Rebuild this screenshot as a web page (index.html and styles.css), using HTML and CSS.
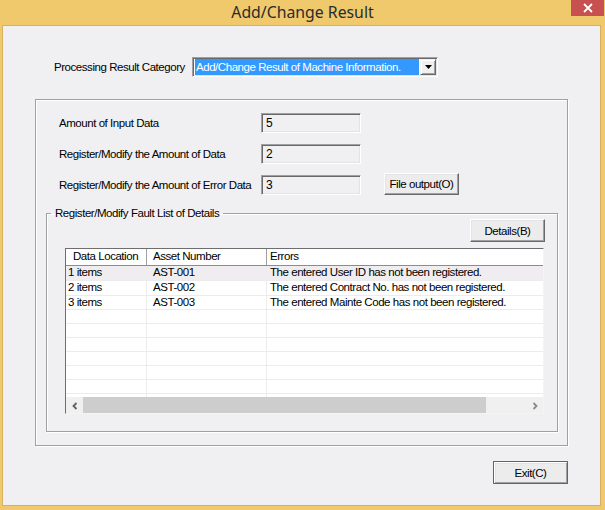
FILE: index.html
```html
<!DOCTYPE html>
<html>
<head>
<meta charset="utf-8">
<title>Add/Change Result</title>
<link rel="stylesheet" href="styles.css">
</head>
<body>
<div class="window">
  <div class="titlebar">
    <span class="title-spacer"></span>
    <span class="title">Add/Change Result</span>
    <div class="close-btn">
      <svg width="10" height="10" viewBox="0 0 10 10"><path d="M1 1 L9 9 M9 1 L1 9" stroke="#fff" stroke-width="1.8" fill="none"/></svg>
    </div>
  </div>
  <div class="client">
    <div class="category-row">
      <span class="cat-label">Processing Result Category</span>
      <div class="combo">
        <span class="combo-value">Add/Change Result of Machine Information.</span>
        <span class="combo-btn"><svg width="7" height="4" viewBox="0 0 7 4"><path d="M0 0 H7 L3.5 4 Z" fill="#000"/></svg></span>
      </div>
    </div>

    <div class="outer-box">
      <div class="field-row">
        <span class="field-label">Amount of Input Data</span>
        <div class="textbox">5</div>
      </div>
      <div class="field-row">
        <span class="field-label">Register/Modify the Amount of Data</span>
        <div class="textbox">2</div>
      </div>
      <div class="field-row">
        <span class="field-label">Register/Modify the Amount of Error Data</span>
        <div class="textbox">3</div>
        <button class="btn file-btn">File output(O)</button>
      </div>

      <fieldset class="group">
        <legend>Register/Modify Fault List of Details</legend>
        <div class="group-toolbar">
          <button class="btn details-btn">Details(B)</button>
        </div>
        <div class="listview">
          <div class="lv-header">
            <div class="hcell c1">Data Location</div>
            <div class="hcell c2">Asset Number</div>
            <div class="hcell c3">Errors</div>
          </div>
          <div class="lv-body">
            <div class="lv-row sel"><div class="cell c1">1 items</div><div class="cell c2">AST-001</div><div class="cell c3">The entered User ID has not been registered.</div></div>
            <div class="lv-row"><div class="cell c1">2 items</div><div class="cell c2">AST-002</div><div class="cell c3">The entered Contract No. has not been registered.</div></div>
            <div class="lv-row"><div class="cell c1">3 items</div><div class="cell c2">AST-003</div><div class="cell c3">The entered Mainte Code has not been registered.</div></div>
            <div class="lv-row"><div class="cell c1"></div><div class="cell c2"></div><div class="cell c3"></div></div>
            <div class="lv-row"><div class="cell c1"></div><div class="cell c2"></div><div class="cell c3"></div></div>
            <div class="lv-row"><div class="cell c1"></div><div class="cell c2"></div><div class="cell c3"></div></div>
            <div class="lv-row"><div class="cell c1"></div><div class="cell c2"></div><div class="cell c3"></div></div>
            <div class="lv-row"><div class="cell c1"></div><div class="cell c2"></div><div class="cell c3"></div></div>
            <div class="lv-row"><div class="cell c1"></div><div class="cell c2"></div><div class="cell c3"></div></div>
            <div class="lv-row"><div class="cell c1"></div><div class="cell c2"></div><div class="cell c3"></div></div>
          </div>
          <div class="hscroll">
            <span class="sb-arrow left"><svg width="8" height="8" viewBox="0 0 8 8"><path d="M5.5 1 L2.5 4 L5.5 7" stroke="#606060" stroke-width="1.8" fill="none"/></svg></span>
            <span class="sb-thumb"></span>
            <span class="sb-track"></span>
            <span class="sb-arrow right"><svg width="8" height="8" viewBox="0 0 8 8"><path d="M2.5 1 L5.5 4 L2.5 7" stroke="#8a8a8a" stroke-width="1.8" fill="none"/></svg></span>
          </div>
        </div>
      </fieldset>
    </div>

    <div class="footer">
      <button class="btn exit-btn">Exit(C)</button>
    </div>
  </div>
</div>
</body>
</html>
```

FILE: styles.css
```css
* { box-sizing: border-box; }

html, body {
  margin: 0;
  padding: 0;
}

body {
  width: 605px;
  height: 510px;
  overflow: hidden;
  font-family: "Liberation Sans", Arial, sans-serif;
  font-size: 11.5px;
  letter-spacing: -0.45px;
  color: #000;
}

.window {
  width: 605px;
  height: 510px;
  background: #f0c96d;
  display: flex;
  flex-direction: column;
}

.titlebar {
  height: 25px;
  flex: none;
  display: grid;
  grid-template-columns: 1fr auto 1fr;
}

.title {
  font-family: "Noto Sans", "Open Sans", sans-serif;
  font-size: 15.8px;
  letter-spacing: 0;
  color: #2b2b2b;
  line-height: 24px;
  padding-left: 0;
}

.close-btn {
  justify-self: end;
  align-self: start;
  width: 33px;
  height: 16px;
  margin-right: 1px;
  background: #c75050;
  display: flex;
  align-items: center;
  justify-content: center;
}

.client {
  flex: 1;
  margin: 0 4px 4px 2px;
  border: 1px solid #d6b163;
  background: #f0eff1;
  display: flex;
  flex-direction: column;
}

/* category row */
.category-row {
  display: flex;
  align-items: center;
  padding: 31px 0 0 51px;
}

.cat-label {
  width: 138px;
  flex: none;
}

.combo {
  width: 246px;
  height: 20px;
  display: flex;
  background: #fff;
  border-style: solid;
  border-width: 1px;
  border-color: #a0a0a0 #fff #fff #a0a0a0;
  box-shadow: inset 1px 1px 0 #696969, inset -1px -1px 0 #e3e3e3;
  padding: 1px 1px 1px 2px;
}

.combo-value {
  flex: 1;
  background: #3399ff;
  color: #fff;
  padding-left: 1px;
  line-height: 16px;
  white-space: nowrap;
  overflow: hidden;
  margin-right: 1px;
}

.combo-btn {
  width: 16px;
  flex: none;
  background: #f0f0f0;
  border-style: solid;
  border-width: 1px;
  border-color: #f0f0f0 #696969 #696969 #f0f0f0;
  box-shadow: inset 1px 1px 0 #fff, inset -1px -1px 0 #a0a0a0;
  display: flex;
  align-items: center;
  justify-content: center;
}

/* outer etched box */
.outer-box {
  margin: 22px 0 0 32px;
  width: 533px;
  height: 347px;
  border: 1px solid #a0a0a0;
  box-shadow: inset 1px 1px 0 #fff, 1px 1px 0 #fff;
  padding: 13px 0 0 10px;
  display: flex;
  flex-direction: column;
}

.field-row {
  display: flex;
  align-items: center;
  height: 20px;
  margin-bottom: 11px;
  padding-left: 13px;
}

.field-label {
  width: 202px;
  flex: none;
}

.textbox {
  width: 100px;
  height: 20px;
  border-style: solid;
  border-width: 1px;
  border-color: #a0a0a0 #fff #fff #a0a0a0;
  box-shadow: inset 1px 1px 0 #696969, inset -1px -1px 0 #e3e3e3;
  padding: 1px 0 0 4px;
  line-height: 16px;
  font-size: 12px;
  letter-spacing: 0;
}

.btn {
  font-family: "Liberation Sans", Arial, sans-serif;
  font-size: 11.5px;
  letter-spacing: -0.45px;
  color: #000;
  background: #ececec;
  border-style: solid;
  border-width: 1px;
  border-color: #fff #696969 #696969 #fff;
  box-shadow: inset -1px -1px 0 #a0a0a0, inset 1px 1px 0 #e3e3e3;
  padding: 0;
  margin: 0;
}

.file-btn {
  width: 75px;
  height: 22px;
  margin-left: 23px;
  margin-top: -3px;
}

/* group box */
.group {
  margin: 1px 0 0 0;
  width: 512px;
  min-width: 0;
  border: 1px solid #a0a0a0;
  box-shadow: inset 1px 1px 0 #fff, 1px 1px 0 #fff;
  padding: 0 0 17px 0;
}

.group legend {
  margin-left: 4px;
  padding: 0 4px;
  line-height: 12px;
}

.group-toolbar {
  display: flex;
  justify-content: flex-end;
  padding-right: 12px;
}

.details-btn {
  width: 75px;
  height: 23px;
}

.listview {
  margin: 6px 0 0 18px;
  width: 479px;
  height: 166px;
  background: #fff;
  border-style: solid;
  border-width: 1px;
  border-color: #6e6e6e #f4f4f4 #f4f4f4 #6e6e6e;
  display: flex;
  flex-direction: column;
  overflow: hidden;
}

.lv-header {
  height: 17px;
  flex: none;
  display: flex;
  border-bottom: 1px solid #8c8c8c;
  box-shadow: 0 1px 0 #d6d6d6;
}

.hcell {
  line-height: 15px;
  border-right: 1px solid #a0a0a0;
  white-space: nowrap;
}

.c1 { width: 81px; flex: none; }
.c2 { width: 120px; flex: none; }
.c3 { flex: 1; border-right: none; }

.hcell.c1 { padding-left: 7px; }
.hcell.c2 { padding-left: 6px; }
.hcell.c3 { padding-left: 3px; }

.lv-body {
  height: 131px;
  flex: none;
  overflow: hidden;
}

.lv-row {
  display: flex;
  height: 14px;
  border-bottom: 1px solid #ececec;
}

.lv-row.sel { background: #efedf0; height: 15px; }
.lv-row:nth-child(2) { height: 15px; }

.cell {
  line-height: 13px;
  white-space: nowrap;
  border-right: 1px solid #ececec;
  overflow: hidden;
}

.cell.c1 { padding-left: 2px; }
.cell.c2 { padding-left: 6px; }
.cell.c3 { padding-left: 3px; border-right: none; }

.hscroll {
  height: 17px;
  flex: none;
  display: flex;
  background: #f0f0f0;
}

.sb-arrow {
  width: 17px;
  flex: none;
  display: flex;
  align-items: center;
  justify-content: center;
}

.sb-thumb {
  width: 403px;
  flex: none;
  background: #cdcdcd;
}

.sb-track {
  flex: 1;
}

/* footer */
.footer {
  display: flex;
  justify-content: flex-end;
  padding: 15px 32px 0 0;
}

.exit-btn {
  width: 75px;
  height: 23px;
  border: 1px solid #646464;
  box-shadow: inset 1px 1px 0 #fff, inset -1px -1px 0 #a0a0a0, inset 2px 2px 0 #e3e3e3;
}
```
